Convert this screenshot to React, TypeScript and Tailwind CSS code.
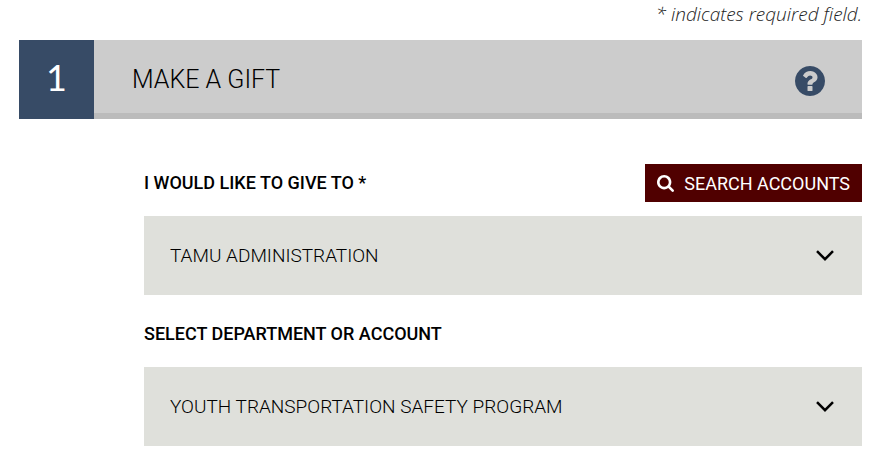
import { useState } from "react";

type SelectFieldProps = {
  id: string;
  value: string;
  options: string[];
  onChange: (v: string) => void;
};

const COLLEGES = ["TAMU ADMINISTRATION"];
const ACCOUNTS = ["YOUTH TRANSPORTATION SAFETY PROGRAM"];

function QuestionIcon() {
  return (
    <svg viewBox="128 128 1536 1536" className="size-[30px] fill-current" aria-hidden="true">
      <path d="M1024 1376v-192q0-14-9-23t-23-9h-192q-14 0-23 9t-9 23v192q0 14 9 23t23 9h192q14 0 23-9t9-23zm256-672q0-88-55.5-163t-138.5-116-170-41q-243 0-371 213-15 24 8 42l132 100q7 6 19 6 16 0 25-12 53-68 86-92 34-24 86-24 48 0 85.5 26t37.5 59q0 38-20 61t-68 45q-63 28-115.5 86.5t-52.5 125.5v36q0 14 9 23t23 9h192q14 0 23-9t9-23q0-19 21.5-49.5t54.5-49.5q32-18 49-28.5t46-35 44.5-48 28-60.5 12.5-81zm384 192q0 209-103 385.5t-279.5 279.5-385.5 103-385.5-103-279.5-279.5-103-385.5 103-385.5 279.5-279.5 385.5-103 385.5 103 279.5 279.5 103 385.5z" />
    </svg>
  );
}

function SearchIcon() {
  return (
    <svg viewBox="64 128 1664 1664" className="size-[17px] fill-current" aria-hidden="true">
      <path d="M1216 832q0-185-131.5-316.5t-316.5-131.5-316.5 131.5-131.5 316.5 131.5 316.5 316.5 131.5 316.5-131.5 131.5-316.5zm512 832q0 52-38 90t-90 38q-54 0-90-38l-343-342q-179 124-399 124-143 0-273.5-55.5t-225-150-150-225-55.5-273.5 55.5-273.5 150-225 225-150 273.5-55.5 273.5 55.5 225 150 150 225 55.5 273.5q0 220-124 399l343 343q37 37 37 90z" />
    </svg>
  );
}

function SelectField({ id, value, options, onChange }: SelectFieldProps) {
  return (
    <div className="grid items-center bg-[#dfe0db]">
      <select
        id={id}
        value={value}
        onChange={(e) => onChange(e.target.value)}
        className="col-start-1 row-start-1 w-full appearance-none py-[26px] pr-16 pl-[26px] text-[19px] leading-[27px] font-light text-black"
      >
        {options.map((o) => (
          <option key={o} value={o}>{o}</option>
        ))}
      </select>
      <svg
        viewBox="0 0 18 11"
        className="pointer-events-none col-start-1 row-start-1 mr-7 h-[11px] w-[18px] justify-self-end"
        fill="none"
        stroke="black"
        strokeWidth="2.5"
        aria-hidden="true"
      >
        <path d="M1 1.2 9 9.2 17 1.2" />
      </svg>
    </div>
  );
}

export default function App() {
  const [college, setCollege] = useState(COLLEGES[0]);
  const [account, setAccount] = useState(ACCOUNTS[0]);

  return (
    <main className="bg-white pr-[22px] pb-4 pl-[19px] font-['Roboto',sans-serif] text-black">
      <p className="pt-0.5 pb-3.5 text-right font-['Open_Sans',sans-serif] text-[19px] leading-6 font-light text-[#222] italic">
        * indicates required field.
      </p>

      {/* Step header */}
      <header className="flex bg-[#ccc]">
        <span className="flex w-[75px] items-center justify-center bg-[#374b66] pb-1 font-['Lato',sans-serif] text-[36px] leading-[75px] text-white">
          1
        </span>
        <div className="flex flex-1 items-center justify-between border-b-[6px] border-[#bbb] pr-[37px] pl-[38px]">
          <h1 className="pt-1.5 text-[25px] leading-8 font-light">MAKE A GIFT</h1>
          <button type="button" aria-label="Help" className="pt-2 text-[#374b66]">
            <QuestionIcon />
          </button>
        </div>
      </header>

      <form className="mt-[45px] ml-[125px]" onSubmit={(e) => e.preventDefault()}>
        <div className="mb-3.5 flex items-center justify-between">
          <label htmlFor="college" className="text-[18px] leading-6 font-medium">
            I WOULD LIKE TO GIVE TO *
          </label>
          <button type="button" className="flex h-[38px] items-center gap-2.5 bg-[#500000] px-3 text-[18px] text-white">
            <SearchIcon />
            SEARCH ACCOUNTS
          </button>
        </div>
        <SelectField id="college" value={college} options={COLLEGES} onChange={setCollege} />

        <label htmlFor="account" className="mt-[27px] mb-[21px] block text-[18px] leading-6 font-medium">
          SELECT DEPARTMENT OR ACCOUNT
        </label>
        <SelectField id="account" value={account} options={ACCOUNTS} onChange={setAccount} />
      </form>
    </main>
  );
}
